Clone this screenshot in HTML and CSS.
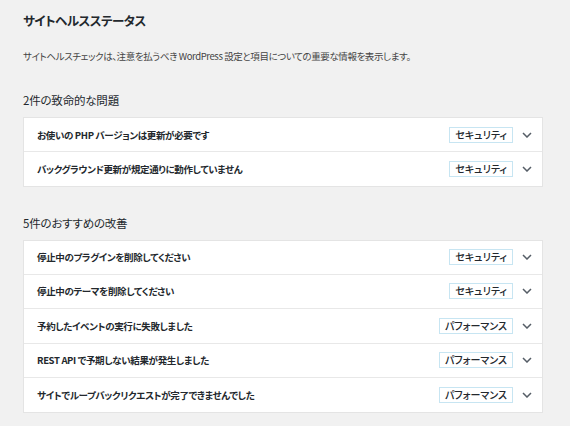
FILE: index.html
```html
<!DOCTYPE html>
<html lang="ja">
<head>
<meta charset="utf-8">
<link rel="stylesheet" href="styles.css">
</head>
<body>
<div class="wrap">
  <h1 class="title">サイトヘルスステータス</h1>
  <p class="desc">サイトヘルスチェックは、注意を払うべき WordPress 設定と項目についての重要な情報を表示します。</p>

  <h2 class="section">2件の致命的な問題</h2>
  <div class="card">
    <div class="row"><span class="label">お使いの PHP バージョンは更新が必要です</span><span class="badge">セキュリティ</span><svg class="chev" viewBox="0 0 10 6"><path d="M1 1l4 4 4-4"/></svg></div>
    <div class="row"><span class="label">バックグラウンド更新が規定通りに動作していません</span><span class="badge">セキュリティ</span><svg class="chev" viewBox="0 0 10 6"><path d="M1 1l4 4 4-4"/></svg></div>
  </div>

  <h2 class="section second">5件のおすすめの改善</h2>
  <div class="card">
    <div class="row"><span class="label">停止中のプラグインを削除してください</span><span class="badge">セキュリティ</span><svg class="chev" viewBox="0 0 10 6"><path d="M1 1l4 4 4-4"/></svg></div>
    <div class="row"><span class="label">停止中のテーマを削除してください</span><span class="badge">セキュリティ</span><svg class="chev" viewBox="0 0 10 6"><path d="M1 1l4 4 4-4"/></svg></div>
    <div class="row"><span class="label">予約したイベントの実行に失敗しました</span><span class="badge">パフォーマンス</span><svg class="chev" viewBox="0 0 10 6"><path d="M1 1l4 4 4-4"/></svg></div>
    <div class="row"><span class="label">REST API で予期しない結果が発生しました</span><span class="badge">パフォーマンス</span><svg class="chev" viewBox="0 0 10 6"><path d="M1 1l4 4 4-4"/></svg></div>
    <div class="row"><span class="label">サイトでループバックリクエストが完了できませんでした</span><span class="badge">パフォーマンス</span><svg class="chev" viewBox="0 0 10 6"><path d="M1 1l4 4 4-4"/></svg></div>
  </div>
</div>
</body>
</html>
```
FILE: styles.css
```css
* { box-sizing: border-box; }
html, body { margin: 0; padding: 0; }
body {
  background: #f1f1f1;
  font-family: "Noto Sans CJK JP", "Noto Sans", sans-serif;
  font-feature-settings: "palt";
  color: #23282d;
}
.wrap {
  width: 520px;
  margin-left: 23px;
  padding-top: 11px;
}
.title {
  margin: 0;
  font-size: 12.5px;
  letter-spacing: -0.5px;
  line-height: 20px;
  font-weight: 700;
  color: #23282d;
}
.desc {
  margin: 17px 0 0;
  font-size: 9.5px;
  letter-spacing: -0.4px;
  line-height: 16px;
  color: #444;
}
.section {
  margin: 27px 0 0;
  font-size: 11.5px;
  letter-spacing: -0.2px;
  line-height: 18px;
  font-weight: 400;
  color: #23282d;
}
.section.second { margin-top: 27px; }
.card {
  margin-top: 8px;
  background: #fff;
  border: 1px solid #e4e4e4;
}
.row {
  display: flex;
  align-items: center;
  height: 34.5px;
  padding: 0 10px 0 13px;
  border-top: 1px solid #e8e8e8;
}
.row:first-child { border-top: 0; height: 33px; }
.label {
  flex: 1;
  font-size: 9.5px;
  letter-spacing: -0.35px;
  font-weight: 600;
  color: #23282d;
}
.badge {
  height: 16px;
  line-height: 14px;
  padding: 0 5px;
  border: 1px solid #c7e5f2;
  font-size: 10px;
  font-weight: 500;
  color: #23282d;
  background: #fff;
}
.chev {
  width: 10px;
  height: 6px;
  margin-left: 9px;
  fill: none;
  stroke: #555d66;
  stroke-width: 1.5;
}
```
